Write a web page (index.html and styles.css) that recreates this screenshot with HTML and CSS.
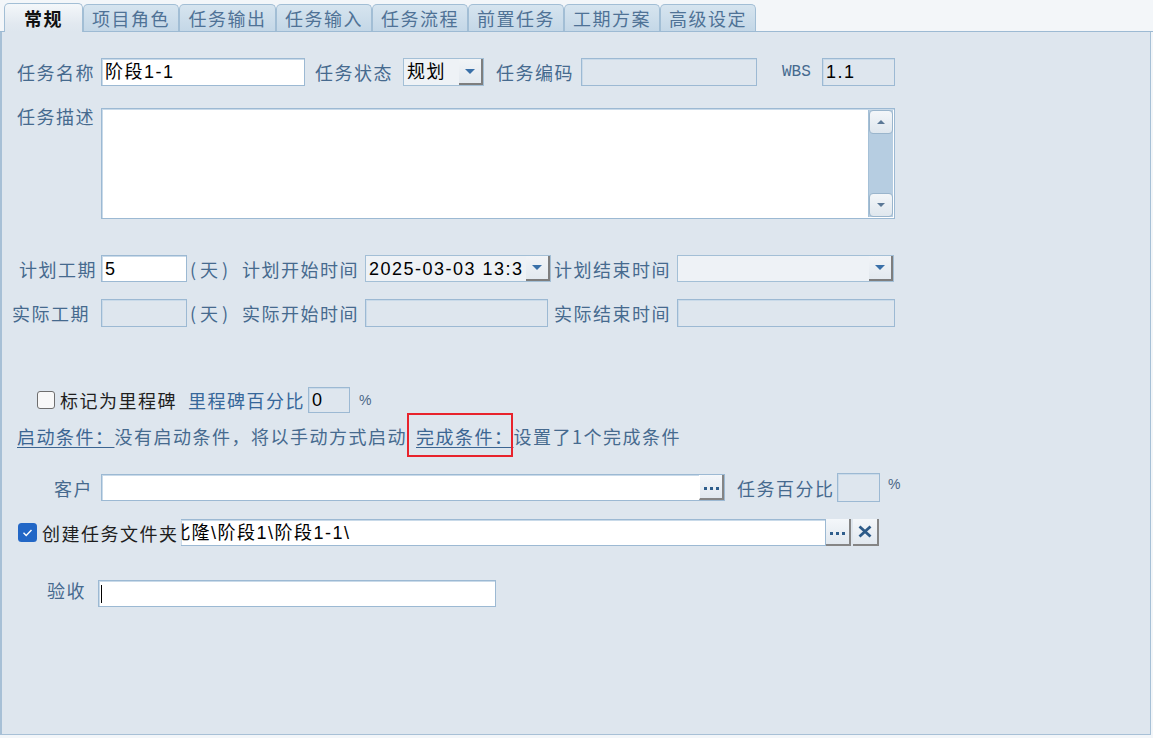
FILE: index.html
```html
<!DOCTYPE html>
<html lang="zh-CN">
<head>
<meta charset="utf-8">
<title>任务</title>
<link rel="stylesheet" href="styles.css">
</head>
<body>
<div class="tabs">
  <div class="tab active t79">常规</div>
  <div class="tab t96">项目角色</div>
  <div class="tab t97">任务输出</div>
  <div class="tab t96">任务输入</div>
  <div class="tab t96">任务流程</div>
  <div class="tab t96">前置任务</div>
  <div class="tab t96">工期方案</div>
  <div class="tab t96">高级设定</div>
</div>
<div class="panel">
  <div class="row row-main">
    <span class="lbl w4 name-l">任务名称</span>
    <div class="field f-name">阶段1-1</div>
    <span class="lbl w4 status-l">任务状态</span>
    <div class="combo f-status"><span class="combo-text">规划</span><span class="drop"></span></div>
    <span class="lbl w4 code-l">任务编码</span>
    <div class="field off f-code"></div>
    <span class="lbl wbs-l">WBS</span>
    <div class="field off f-wbs">1.1</div>
  </div>

  <div class="row row-desc">
    <span class="lbl w4 desc-l">任务描述</span>
    <div class="textarea">
      <div class="ta-body"></div>
      <div class="vscroll">
        <span class="sbtn up"></span>
        <span class="sbtn down"></span>
      </div>
    </div>
  </div>

  <div class="row row-plan">
    <span class="lbl w4 plan-l">计划工期</span>
    <div class="field f-dur">5</div>
    <span class="unit"><span>(</span><span>天</span><span>)</span></span>
    <span class="lbl w6 start-l">计划开始时间</span>
    <div class="combo f-start"><span class="combo-text">2025-03-03 13:3</span><span class="drop"></span></div>
    <span class="lbl w6 end-l">计划结束时间</span>
    <div class="combo f-end"><span class="combo-text"></span><span class="drop"></span></div>
  </div>

  <div class="row row-act">
    <span class="lbl w4 act-l">实际工期</span>
    <div class="field off f-adur"></div>
    <span class="unit"><span>(</span><span>天</span><span>)</span></span>
    <span class="lbl w6 start-l">实际开始时间</span>
    <div class="field off f-astart"></div>
    <span class="lbl w6 aend-l">实际结束时间</span>
    <div class="field off f-aend"></div>
  </div>

  <div class="row row-ms">
    <span class="chk ms-chk"></span>
    <span class="lbl dark ms-l1">标记为里程碑</span>
    <span class="lbl blue ms-l2">里程碑百分比</span>
    <div class="field off f-msp">0</div>
    <span class="pct ms-pct">%</span>
  </div>

  <div class="row row-cond">
    <span class="link c-start">启动条件：</span>
    <span class="ctext">没有启动条件，将以手动方式启动</span>
    <span class="link c-done">完成条件：</span>
    <span class="ctext">设置了1个完成条件</span>
    <span class="mark"></span>
  </div>

  <div class="row row-cust">
    <span class="lbl cust-l">客户</span>
    <div class="field f-cust"><span class="grow"></span><span class="ell"><svg width="15" height="3" viewBox="0 0 15 3"><rect x="0" y="0" width="3" height="3" fill="#2f5e8c"/><rect x="6" y="0" width="3" height="3" fill="#2f5e8c"/><rect x="12" y="0" width="3" height="3" fill="#2f5e8c"/></svg></span></div>
    <span class="lbl w5 tp-l">任务百分比</span>
    <div class="field off f-tp"></div>
    <span class="pct tp-pct">%</span>
  </div>

  <div class="row row-folder">
    <span class="chk on fd-chk"><svg width="19" height="19" viewBox="0 0 19 19"><rect x="0" y="0" width="19" height="19" rx="3.5" fill="#2267c6"/><path d="M5.5 9.8l2.7 2.7 5.3-5.6" stroke="#fff" stroke-width="1.4" fill="none"/></svg></span>
    <span class="lbl dark fd-l">创建任务文件夹</span>
    <div class="field f-folder"><span class="ftext">北隆\阶段1\阶段1-1\</span></div>
    <span class="ell solo"><svg width="15" height="3" viewBox="0 0 15 3"><rect x="0" y="0" width="3" height="3" fill="#2f5e8c"/><rect x="6" y="0" width="3" height="3" fill="#2f5e8c"/><rect x="12" y="0" width="3" height="3" fill="#2f5e8c"/></svg></span>
    <span class="xbtn"><svg width="14" height="13" viewBox="0 0 14 13"><path d="M1.5 1.5l11 10M12.5 1.5l-11 10" stroke="#2c5a88" stroke-width="2.8" fill="none"/></svg></span>
  </div>

  <div class="row row-acc">
    <span class="lbl acc-l">验收</span>
    <div class="field f-acc"><span class="caret"></span></div>
  </div>
</div>
</body>
</html>
```

FILE: styles.css
```css
* { box-sizing: border-box; }
html, body { margin: 0; padding: 0; }
body {
  width: 1153px;
  height: 738px;
  overflow: hidden;
  background: #f3f6f9;
  font-family: "Noto Sans CJK SC", sans-serif;
  font-size: 18px;
  line-height: 20px;
  letter-spacing: 1.5px;
  color: #466a8e;
}

/* tabs */
.tabs {
  display: flex;
  height: 32px;
  padding: 4px 0 0 4px;
  border-bottom: 1px solid #9dbad3;
}
.tab {
  flex: none;
  height: 27px;
  border: 1px solid #a2bed5;
  border-bottom: none;
  border-radius: 5px 5px 0 0;
  background: linear-gradient(#d6e4ef, #c4d7e7);
  color: #4f7296;
  display: flex;
  align-items: center;
  justify-content: center;
}
.tab.active {
  height: 29px;
  margin-top: -1px;
  position: relative;
  z-index: 1;
  background: linear-gradient(#f4f7fa, #e2e9f0 70%, #dee6ee);
  color: #111;
  font-weight: 600;
}
.t79 { width: 79px; }
.t96 { width: 96px; }
.t97 { width: 97px; }

/* panel */
.panel {
  width: 1151px;
  height: 703px;
  background: #dee6ee;
  border-left: 2px solid #a7c0d6;
  border-right: 1px solid #a7c0d6;
  border-bottom: 1px solid #a7c0d6;
  display: flex;
  flex-direction: column;
}
.row {
  display: flex;
  align-items: center;
  flex: none;
}
.lbl { flex: none; white-space: nowrap; }
.w4 { width: 78px; }
.w5 { width: 98px; }
.w6 { width: 117px; }
.dark { color: #1e1e1e; }
.blue { color: #36679a; }

.field {
  flex: none;
  height: 100%;
  border: 1px solid #9cb9d3;
  box-shadow: inset 1px 1px 0 #c9dae9;
  background: #fff;
  color: #000;
  display: flex;
  align-items: center;
  padding-left: 3px;
  font-family: "Liberation Sans", "Noto Sans CJK SC", sans-serif;
  overflow: hidden;
  white-space: nowrap;
}
.field.off { background: #dee6ee; }

.combo {
  flex: none;
  height: 100%;
  display: flex;
  align-items: stretch;
  border: 1px solid #a3bfd6;
  background: #eef2f6;
  color: #000;
  font-family: "Liberation Sans", "Noto Sans CJK SC", sans-serif;
}
.combo-text {
  flex: 1;
  padding-left: 3px;
  display: flex;
  align-items: center;
  overflow: hidden;
  white-space: nowrap;
}
.drop {
  flex: none;
  width: 24px;
  background: linear-gradient(#f1f4f7, #e3e9ef);
  border-right: 2px solid #7e7e7e;
  border-bottom: 2px solid #7e7e7e;
  display: flex;
  align-items: center;
  justify-content: center;
}
.drop::after {
  content: "";
  border-left: 5px solid transparent;
  border-right: 5px solid transparent;
  border-top: 5px solid #3a70a8;
}

/* row 1 */
.row-main { margin-top: 26px; height: 28px; }
.name-l { margin-left: 15px; }
.f-name { margin-left: 6px; width: 204px; }
.status-l { margin-left: 10px; }
.f-status { margin-left: 10px; width: 81px; }
.code-l { margin-left: 12px; }
.f-code { margin-left: 7px; width: 176px; }
.wbs-l {
  margin-left: 25px;
  width: 40px;
  font-family: "Liberation Mono", monospace;
  font-size: 16px;
  letter-spacing: 0;
}
.f-wbs { width: 73px; }

/* description */
.row-desc { margin-top: 22px; height: 111px; align-items: flex-start; }
.desc-l { margin-left: 15px; margin-top: -2px; }
.textarea {
  flex: none;
  margin-left: 6px;
  width: 794px;
  height: 111px;
  border: 1px solid #9cb9d3;
  box-shadow: inset 1px 1px 0 #c9dae9;
  background: #fff;
  display: flex;
  padding: 1px 1px 1px 2px;
}
.ta-body { flex: 1; }
.vscroll {
  flex: none;
  width: 25px;
  background: #b6cde1;
  border-left: 1px solid #a5c0d7;
  display: flex;
  flex-direction: column;
  justify-content: space-between;
}
.sbtn {
  height: 24px;
  border: 1px solid #9ab5cc;
  border-radius: 4px;
  background: linear-gradient(#f3f6f9, #dfe7ee);
  display: flex;
  align-items: center;
  justify-content: center;
}
.sbtn.up::after {
  content: "";
  border-left: 4px solid transparent;
  border-right: 4px solid transparent;
  border-bottom: 4px solid #5b7896;
}
.sbtn.down::after {
  content: "";
  border-left: 4px solid transparent;
  border-right: 4px solid transparent;
  border-top: 4px solid #5b7896;
}

/* plan / actual */
.row-plan { margin-top: 36px; height: 27px; }
.plan-l { margin-left: 17px; }
.f-dur { margin-left: 4px; width: 86px; }
.unit {
  flex: none;
  margin-left: 3px;
  width: 38px;
  display: flex;
  justify-content: space-between;
  letter-spacing: 0;
}
.start-l { margin-left: 14px; }
.f-start { margin-left: 6px; width: 186px; }
.end-l { margin-left: 3px; }
.f-end { margin-left: 6px; width: 217px; }

.row-act { margin-top: 17px; height: 28px; }
.act-l { margin-left: 10px; }
.f-adur { margin-left: 11px; width: 86px; }
.f-astart { margin-left: 6px; width: 183px; }
.aend-l { margin-left: 6px; }
.f-aend { margin-left: 6px; width: 218px; }

/* milestone */
.row-ms { margin-top: 60px; height: 26px; }
.chk {
  flex: none;
  width: 18px;
  height: 18px;
  border: 1px solid #6e6e6e;
  border-radius: 3px;
  background: #f8f8f8;
}
.chk.on {
  width: 19px;
  height: 19px;
  border: none;
  background: none;
  display: flex;
}
.ms-chk { margin-left: 35px; }
.ms-l1 { margin-left: 5px; width: 117px; }
.ms-l2 { margin-left: 11px; width: 117px; }
.f-msp { margin-left: 3px; width: 42px; }
.pct {
  flex: none;
  font-family: "Liberation Sans", sans-serif;
  font-size: 14px;
  letter-spacing: 0;
  color: #4b6787;
}
.ms-pct { margin-left: 9px; }

/* conditions */
.row-cond { height: 44px; padding-top: 2px; position: relative; }
.link {
  flex: none;
  color: #3b6592;
  text-decoration: underline;
  text-underline-offset: 3px;
}
.ctext { flex: none; color: #466a8e; }
.c-start { margin-left: 15px; }
.c-done { margin-left: 9px; }
.mark {
  position: absolute;
  left: 405px;
  top: 0;
  width: 106px;
  height: 44px;
  border: 2px solid #e8232c;
}

/* customer */
.row-cust { margin-top: 16px; height: 29px; }
.cust-l { margin-left: 52px; width: 39px; }
.f-cust { margin-left: 8px; width: 624px; height: 27px; padding: 0; }
.grow { flex: 1; }
.ell {
  flex: none;
  width: 25px;
  height: 100%;
  background: linear-gradient(#f4f7fa, #e1e8ef);
  border-left: 1px solid #fff;
  border-right: 2px solid #858585;
  border-bottom: 2px solid #858585;
  display: flex;
  align-items: center;
  justify-content: center;
  padding-top: 3px;
}
.tp-l { margin-left: 12px; }
.f-tp { margin-left: 2px; width: 43px; }
.tp-pct { margin-left: 8px; align-self: flex-start; margin-top: 1px; }

/* folder */
.row-folder { margin-top: 17px; height: 27px; }
.fd-chk { margin-left: 16px; }
.fd-l { margin-left: 5px; width: 139px; }
.f-folder { width: 645px; border-left: none; padding-left: 0; }
.ftext { margin-left: -9px; }
.ell.solo { border-left: none; }
.xbtn {
  flex: none;
  margin-left: 2px;
  width: 26px;
  height: 100%;
  background: linear-gradient(#f4f7fa, #e1e8ef);
  border-right: 2px solid #858585;
  border-bottom: 2px solid #858585;
  display: flex;
  align-items: center;
  justify-content: center;
}

/* acceptance */
.row-acc { margin-top: 34px; height: 27px; }
.acc-l { margin-left: 45px; width: 39px; align-self: flex-start; }
.f-acc { margin-left: 12px; width: 398px; padding-left: 2px; }
.caret { width: 1px; height: 18px; background: #000; }
```
